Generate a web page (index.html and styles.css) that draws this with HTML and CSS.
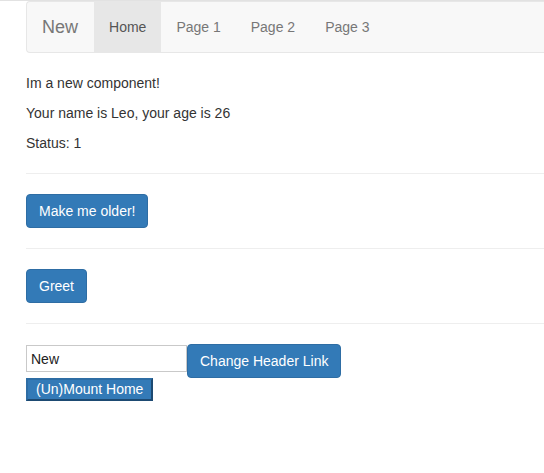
FILE: index.html
```html
<!DOCTYPE html>
<html>
<head>
<meta charset="utf-8">
<link rel="stylesheet" href="styles.css">
</head>
<body>
<div class="topline"></div>
<div class="container">
  <nav class="navbar">
    <a class="brand">New</a>
    <ul class="nav">
      <li class="active"><a>Home</a></li>
      <li><a>Page 1</a></li>
      <li><a>Page 2</a></li>
      <li><a>Page 3</a></li>
    </ul>
  </nav>
  <p>Im a new component!</p>
  <p>Your name is Leo, your age is 26</p>
  <p>Status: 1</p>
  <hr>
  <button class="btn">Make me older!</button>
  <hr>
  <button class="btn">Greet</button>
  <hr>
  <div class="row">
    <input class="field" type="text" value="New">
    <button class="btn">Change Header Link</button>
  </div>
  <button class="plain">(Un)Mount Home</button>
</div>
</body>
</html>
```
FILE: styles.css
```css
html, body {
  margin: 0;
  padding: 0;
  overflow: hidden;
  background: #fff;
}
body {
  font-family: "Liberation Sans", Arial, sans-serif;
  font-size: 14px;
  line-height: 20px;
  color: #333;
}
.topline {
  height: 1px;
  background: #e2e2e2;
}
.container {
  padding-left: 26px;
}
.navbar {
  display: flex;
  height: 50px;
  background: #f8f8f8;
  border: 1px solid #e7e7e7;
  border-right: none;
  border-radius: 4px 0 0 4px;
  margin-bottom: 20px;
}
.brand {
  padding: 15px 16px 15px 15px;
  font-size: 18px;
  line-height: 20px;
  color: #777;
}
.nav {
  display: flex;
  list-style: none;
  margin: 0;
  padding: 0;
}
.nav a {
  display: block;
  padding: 15px 15px;
  line-height: 20px;
  color: #777;
}
.nav .active a {
  background: #e7e7e7;
  color: #555;
}
p {
  margin: 0 0 10px;
}
hr {
  margin: 20px 0;
  border: 0;
  border-top: 1px solid #eee;
  height: 0;
}
.btn {
  display: inline-block;
  font-family: inherit;
  font-size: 14px;
  line-height: 20px;
  padding: 6px 12px;
  color: #fff;
  background: #337ab7;
  border: 1px solid #2e6da4;
  border-radius: 4px;
  margin: 0;
}
.row {
  display: flex;
  align-items: flex-start;
}
.field {
  box-sizing: border-box;
  width: 161px;
  height: 27px;
  margin: 1px 0 0;
  padding: 0 4px;
  border: 1px solid #c9c9c9;
  font-family: inherit;
  font-size: 14px;
  color: #222;
  outline: none;
}
.plain {
  display: block;
  margin: 0;
  font-family: inherit;
  font-size: 14px;
  line-height: 19px;
  padding: 0 8px;
  color: #fff;
  background: #337ab7;
  border: 2px solid;
  border-color: #2e6da4 #1d4a72 #1d4a72 #2e6da4;
  border-radius: 0;
}
```
